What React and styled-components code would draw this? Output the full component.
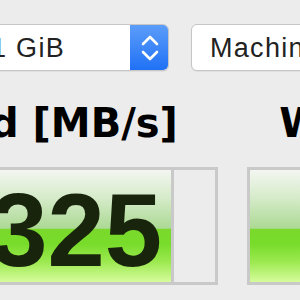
import React from 'react';
import styled, { createGlobalStyle } from 'styled-components';

const Global = createGlobalStyle`
  html, body { margin: 0; padding: 0; background: #ececec; overflow: hidden; }
  body { font-family: "Liberation Sans", Arial, sans-serif; }
`;

const Window = styled.div`
  width: 300px;
  height: 300px;
  overflow: hidden;
  background: #ececec;
`;

const Toolbar = styled.div`
  display: flex;
  gap: 22px;
  padding-top: 24px;
  margin-left: -60px;
`;

const Select = styled.div`
  display: flex;
  flex: 0 0 ${p => p.$w}px;
  height: 47px;
  box-sizing: border-box;
  background: #fff;
  border: 1px solid #c6c6c6;
  border-radius: 6px;
  overflow: hidden;
  box-shadow: 0 1px 1px rgba(0, 0, 0, 0.06);
`;

const SelectLabel = styled.span`
  flex: 1;
  display: flex;
  align-items: center;
  padding-left: ${p => p.$pad}px;
  padding-top: 1px;
  font-size: 27px;
  letter-spacing: 1.3px;
  color: #222;
  white-space: nowrap;
`;

const Stepper = styled.div`
  flex: 0 0 39px;
  margin: -1px -1px -1px 0;
  background: linear-gradient(#5d9ef9, #1f70f6);
  display: flex;
  align-items: center;
  justify-content: center;
`;

const Columns = styled.div`
  display: grid;
  grid-template-columns: 350px 350px;
  column-gap: 29px;
  margin-left: -132px;
  margin-top: 28px;
`;

const Column = styled.section`
  display: flex;
  flex-direction: column;
  gap: 20px;
`;

const Heading = styled.h2`
  margin: 0;
  padding-right: 3px;
  text-align: center;
  font-family: "DejaVu Sans", sans-serif;
  font-weight: bold;
  font-size: 40px;
  line-height: 48px;
  color: #000;
  white-space: nowrap;
`;

const Meter = styled.div`
  height: 118px;
  box-sizing: border-box;
  border: 3px solid #c9c9c9;
  background: #ececec;
  display: flex;
`;

const Fill = styled.div`
  box-sizing: border-box;
  border-right: 3px solid #c9c9c9;
  background: linear-gradient(
    to bottom,
    #f3f6f1 0%,
    #d5ebc9 25%,
    #acd994 52%,
    #7ad92c 53%,
    #78dc2a 66%,
    #9ce950 82%,
    #d6fc9c 100%
  );
  display: flex;
  align-items: center;
  justify-content: flex-end;
  padding: 8px 9px 0 0;
  overflow: hidden;
`;

const Value = styled.span`
  font-family: "Liberation Sans", Arial, sans-serif;
  font-weight: bold;
  font-size: 103px;
  line-height: 1;
  color: #18240c;
`;

const Chevrons = () => (
  <svg width="20" height="30" viewBox="0 0 20 30" fill="none" stroke="#fff" strokeWidth="2.6" strokeLinecap="round" strokeLinejoin="round">
    <path d="M3 11 L10 4 L17 11" />
    <path d="M3 19 L10 26 L17 19" />
  </svg>
);

const data = [
  { title: 'Read [MB/s]', value: '325', pct: 88.1 },
  { title: 'Write [MB/s]', value: '312', pct: 86 },
];

export default function App() {
  return (
    <Window>
      <Global />
      <Toolbar>
        <Select $w={229}>
          <SelectLabel $pad={50}>1 GiB</SelectLabel>
          <Stepper><Chevrons /></Stepper>
        </Select>
        <Select $w={180}>
          <SelectLabel $pad={18}>Machine</SelectLabel>
        </Select>
      </Toolbar>
      <Columns>
        {data.map(d => (
          <Column key={d.title}>
            <Heading>{d.title}</Heading>
            <Meter>
              <Fill style={{ width: `${d.pct}%` }}>
                <Value>{d.value}</Value>
              </Fill>
            </Meter>
          </Column>
        ))}
      </Columns>
    </Window>
  );
}
